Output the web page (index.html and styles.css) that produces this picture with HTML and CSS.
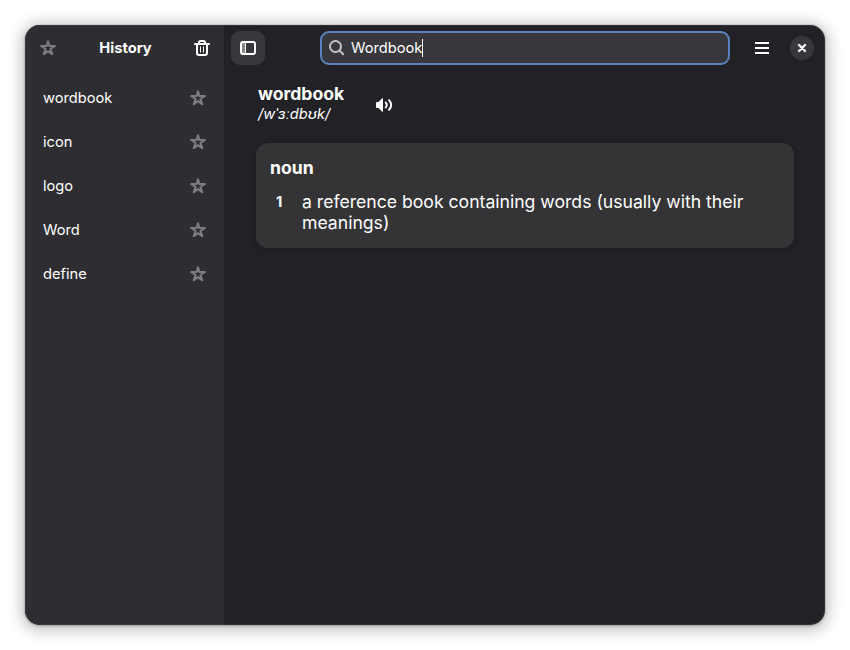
FILE: index.html
```html
<!DOCTYPE html>
<html lang="en">
<head>
<meta charset="utf-8">
<title>Wordbook</title>
<link rel="stylesheet" href="styles.css">
</head>
<body>
<svg class="defs" width="0" height="0" aria-hidden="true">
  <symbol id="star" viewBox="0 0 16 16">
    <path d="M8 1.2 9.4 6H14.9L10.5 9 12.2 14.2 8 11.1 3.8 14.2 5.5 9 1.1 6H6.6Z" fill="none" stroke="currentColor" stroke-width="2.1" stroke-linejoin="round"/>
  </symbol>
</svg>
<main class="window">
  <aside class="sidebar">
    <header class="side-header">
      <svg class="icon dim"><use href="#star"/></svg>
      <h1 class="side-title">History</h1>
      <svg class="icon" viewBox="0 0 16 16">
        <path d="M0.9 4H15.1" stroke="currentColor" stroke-width="2" stroke-linecap="round"/>
        <path d="M5 3.5V2.5Q5 1 6.5 1H9.5Q11 1 11 2.5V3.5M3 4V13Q3 15 5 15H11Q13 15 13 13V4" fill="none" stroke="currentColor" stroke-width="2"/>
        <path d="M6.5 6.5V12.5M9.5 6.5V12.5" stroke="currentColor"/>
      </svg>
    </header>
    <ul class="history">
      <li class="row">wordbook<svg class="icon dim"><use href="#star"/></svg></li>
      <li class="row">icon<svg class="icon dim"><use href="#star"/></svg></li>
      <li class="row">logo<svg class="icon dim"><use href="#star"/></svg></li>
      <li class="row">Word<svg class="icon dim"><use href="#star"/></svg></li>
      <li class="row">define<svg class="icon dim"><use href="#star"/></svg></li>
    </ul>
  </aside>
  <section class="content">
    <header class="toolbar">
      <div class="toggle">
        <svg class="icon" viewBox="0 0 16 16">
          <path d="M2 3H5V13H2Z" fill="currentColor" opacity=".4"/>
          <rect x="1" y="2" width="14" height="12" rx="2" fill="none" stroke="currentColor" stroke-width="2"/>
          <path d="M5.5 2V14" stroke="currentColor"/>
        </svg>
      </div>
      <div class="search">
        <svg class="icon search-icon" viewBox="0 0 16 16">
          <circle cx="6.5" cy="6.5" r="5.5" fill="none" stroke="currentColor" stroke-width="2"/>
          <path d="M10.6 10.6 14.2 14.2" stroke="currentColor" stroke-width="2" stroke-linecap="round"/>
        </svg>
        <span class="query">Wordbook</span><span class="caret"></span>
      </div>
      <svg class="icon menu" viewBox="0 0 16 16"><path d="M1 3H15M1 8H15M1 13H15" stroke="currentColor" stroke-width="2"/></svg>
      <div class="close">
        <svg class="icon" viewBox="0 0 16 16"><path d="M5 5 11 11M11 5 5 11" stroke="currentColor" stroke-width="2.4" stroke-linecap="round"/></svg>
      </div>
    </header>
    <div class="entry">
      <div class="term">
        <h2 class="word">wordbook</h2>
        <p class="ipa">/wˈɜːdbʊk/</p>
      </div>
      <svg class="icon speaker" viewBox="0 0 16 16">
        <path d="M0 6Q0 5 1 5H2.5L6 1.4Q6.4 1 7 1V15Q6.4 15 6 14.6L2.5 11H1Q0 11 0 10Z" fill="currentColor"/>
        <path d="M9.8 5.5Q11.7 8 9.8 10.5M13 3.2Q17.3 8 13 12.8" fill="none" stroke="currentColor" stroke-width="2" stroke-linecap="round"/>
      </svg>
    </div>
    <article class="card">
      <h3 class="pos">noun</h3>
      <div class="sense">
        <span class="number">1</span>
        <p class="definition">a reference book containing words (usually with their meanings)</p>
      </div>
    </article>
  </section>
</main>
</body>
</html>
```
FILE: styles.css
```css
* { box-sizing: border-box; margin: 0; padding: 0; }
body {
  height: 650px;
  padding: 25px;
  overflow: hidden;
  background: #fff;
  color: #fff;
  font-family: Inter, "Noto Sans", sans-serif;
  font-size: 14.67px;
}
.defs { position: absolute; }
.window {
  display: flex;
  width: 800px;
  height: 600px;
  overflow: hidden;
  border-radius: 15px;
  background: #222226;
  box-shadow: 0 1px 3px rgba(0, 0, 0, .25), 0 2px 14px 5px rgba(0, 0, 0, .2), 0 0 0 1px rgba(0, 0, 0, .05);
  position: relative;
}
.window::after {
  content: "";
  position: absolute;
  inset: 0;
  border-radius: 15px;
  box-shadow: inset 0 0 0 1px rgba(255, 255, 255, .07);
}
.icon { display: block; flex: none; width: 16px; height: 16px; }
.dim { color: #7d7d7f; }
.sidebar { width: 200px; background: #2e2e32; border-right: 1px solid #1f1f23; }
.side-header {
  display: flex;
  align-items: center;
  justify-content: space-between;
  height: 46px;
  padding: 0 14px 0 15px;
}
.side-title { padding-left: 1px; font-size: 14.67px; font-weight: 700; }
.history { list-style: none; padding-top: 5px; }
.row {
  display: flex;
  align-items: center;
  justify-content: space-between;
  height: 44px;
  padding: 0 18px;
}
.content { flex: 1; }
.toolbar { display: flex; align-items: center; height: 46px; padding: 0 11px 0 6px; }
.toggle {
  display: grid;
  place-items: center;
  width: 34px;
  height: 34px;
  border-radius: 9px;
  background: #38383c;
}
.search {
  display: flex;
  align-items: center;
  width: 410px;
  height: 34px;
  margin-left: 55px;
  padding-left: 7px;
  border: 2px solid #5a83bd;
  border-radius: 9px;
  background: #38383c;
}
.search-icon { color: #c3c3c4; }
.query { margin-left: 6px; }
.caret { width: 1px; height: 18px; background: #fff; }
.menu { margin-left: 24px; }
.close {
  display: grid;
  place-items: center;
  width: 24px;
  height: 24px;
  margin-left: 20px;
  border-radius: 50%;
  background: #38383c;
}
.entry { display: flex; align-items: center; gap: 32px; height: 43px; margin-top: 12px; padding: 0 33px; }
.word { font-size: 17.6px; font-weight: 700; line-height: 21px; }
.ipa { padding-top: 1px; font-size: 14.67px; font-style: italic; line-height: 18px; }
.term { height: 43px; }
.card {
  width: 538px;
  height: 105px;
  margin: 17px 0 0 31px;
  padding: 14px;
  border-radius: 12px;
  background: #343436;
  box-shadow: 0 0 0 1px rgba(0, 0, 0, .03), 0 1px 3px 1px rgba(0, 0, 0, .07), 0 2px 6px 2px rgba(0, 0, 0, .03);
}
.pos { font-size: 17.6px; font-weight: 700; line-height: 21px; }
.sense { display: flex; margin-top: 13px; }
.number { width: 32px; padding: 1px 0 0 6px; font-size: 14.67px; font-weight: 700; line-height: 21px; }
.definition { flex: 1; font-size: 17.63px; line-height: 21px; }
```
